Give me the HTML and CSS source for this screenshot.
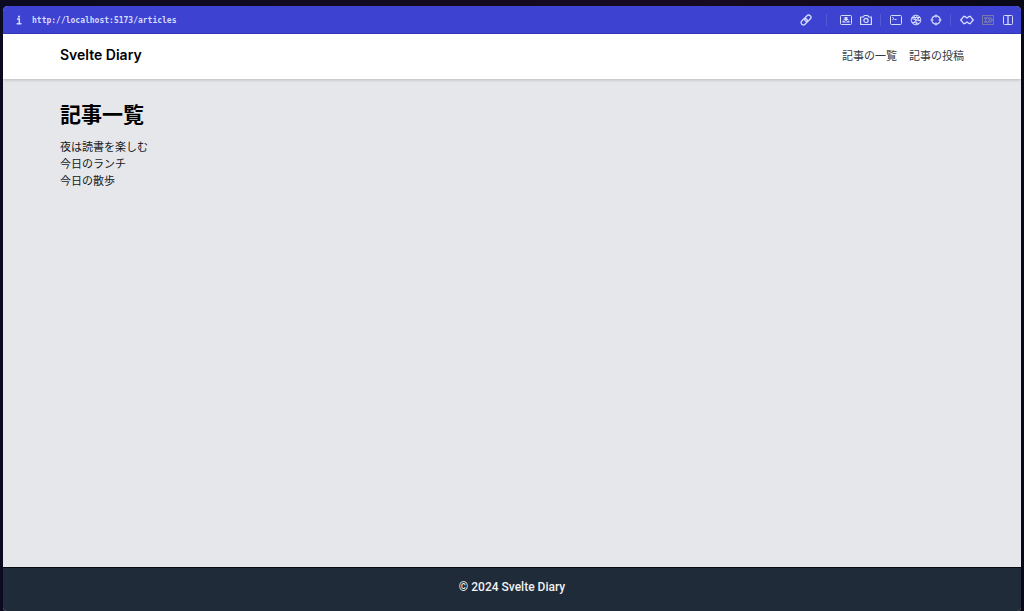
FILE: index.html
```html
<!DOCTYPE html>
<html lang="ja">
<head>
<meta charset="utf-8">
<title>Svelte Diary</title>
<link rel="stylesheet" href="styles.css">
</head>
<body>
<div class="window">
  <div class="toolbar">
    <button class="tool info" aria-label="Site information"><svg viewBox="0 0 12 12"><path d="M5 1.8h2v1.7H5z" fill="currentColor" stroke="none"/><path d="M4 5h2.3v4.8M3.7 9.8h4.8" stroke-width="1.5"/></svg></button>
    <span class="url">http://localhost:5173/articles</span>
    <div class="tools">
      <div class="group">
        <button class="tool" aria-label="Copy link"><svg viewBox="0 0 12 12"><g transform="rotate(-45 6 6)" stroke-width="1.3"><rect x="0" y="3.7" width="7" height="4.6" rx="2.3"/><rect x="5" y="3.7" width="7" height="4.6" rx="2.3"/></g></svg></button>
      </div>
      <div class="group">
        <button class="tool" aria-label="Capture element"><svg viewBox="0 0 12 12"><rect x=".5" y="1.5" width="11" height="9" rx="1"/><path d="M4.5 3h3v2h1.300L6 7.200 3.200 5h1.300zM2.500 6.700h1.500L6 8.200l2-1.500h1.500V8.500h-7z" fill="currentColor" stroke="none"/></svg></button>
        <button class="tool" aria-label="Take screenshot"><svg viewBox="0 0 12 12"><path d="M.6 3h2.7l1-1.5h3.4l1 1.5h2.7v7.5H.6z" stroke-width="1.2" stroke-linejoin="round"/><circle cx="6" cy="6.4" r="2.1" stroke-width="1.2"/></svg></button>
      </div>
      <div class="group">
        <button class="tool" aria-label="Console"><svg viewBox="0 0 12 12"><rect x=".5" y="1.5" width="11" height="9" rx="1"/><path d="M2.4 3.4 4 4.6 2.4 5.8M4.5 5.5h2"/></svg></button>
        <button class="tool" aria-label="Network"><svg viewBox="0 0 12 12"><circle cx="6" cy="6" r="4.8"/><path d="M1.5 4.5 10.5 7M4 1.6 7 10.7M9.5 2.5 3 9.7M6 1.2l4 6M2 8.2l7 1.3M2 3.5h8"/></svg></button>
        <button class="tool" aria-label="Inspect"><svg viewBox="0 0 12 12"><circle cx="6" cy="6" r="4.2" stroke-width="1.2"/><path d="M6 .5v3M6 8.5v3M.5 6h3M8.5 6h3" stroke-width="1.2"/></svg></button>
      </div>
      <div class="group">
        <button class="tool wide" aria-label="Extensions"><svg viewBox="0 0 14 12"><path d="M3.500 2.500H5L7 4l2-1.500h1.500L11.500 4 13.300 6l-1.800 2-1 1.500H9L7 8 5 9.500H3.500L2.500 8 .7 6l1.800-2z" stroke-width="1.3" stroke-linejoin="round"/></svg></button>
        <button class="tool muted" aria-label="Edit page" disabled><svg viewBox="0 0 12 12"><rect x=".5" y="1.5" width="11" height="9"/><path d="M2 4h2.500L3.500 6l1 2H2M5 3l3 3-3 3M7.500 3l3 3-3 3" stroke-width="1.300"/></svg></button>
        <button class="tool" aria-label="Split view"><svg viewBox="0 0 12 12"><rect x="1.500" y="1.500" width="9" height="9" rx="1"/><path d="M6 1.500v9" stroke-width="1.300"/></svg></button>
      </div>
    </div>
  </div>
  <header class="header">
    <a class="brand" href="#">Svelte Diary</a>
    <nav class="nav"><a href="#">記事の一覧</a><a href="#">記事の投稿</a></nav>
  </header>
  <main class="main">
    <h1 class="heading">記事一覧</h1>
    <ul class="articles">
      <li><a href="#">夜は読書を楽しむ</a></li>
      <li><a href="#">今日のランチ</a></li>
      <li><a href="#">今日の散歩</a></li>
    </ul>
  </main>
  <footer class="footer">© 2024 Svelte Diary</footer>
</div>
</body>
</html>
```
FILE: styles.css
```css
* { box-sizing: border-box; }
body {
  margin: 0;
  height: 100vh;
  padding: 6px 3px 0;
  background: linear-gradient(90deg, #0c0a20, #180a20 70%, #090817);
  font-family: Inter, "Noto Sans CJK JP", sans-serif;
  font-size: 11px;
  color: #17191d;
}
a { color: inherit; text-decoration: none; }
.window {
  display: flex;
  flex-direction: column;
  height: 100%;
  overflow: hidden;
  border-radius: 5px 5px 4px 4px;
  background: #e5e7eb;
}
.toolbar {
  display: flex;
  align-items: center;
  flex: none;
  height: 28px;
  padding: 0 7px 0 10px;
  background: #3e42d0;
  border-bottom: 1px solid #3438b8;
  color: #d5dcff;
}
.url {
  margin-left: 7px;
  padding-top: 2px;
  font: bold 8px "DejaVu Sans Mono", monospace;
}
.tools { display: flex; align-items: center; margin-left: auto; }
.group { display: flex; align-items: center; gap: 8px; }
.group + .group { margin-left: 8px; padding-left: 9px; border-left: 1px solid #5559d8; }
.group:nth-child(2) { margin-left: 14px; padding-left: 13px; }
.tool {
  width: 12px;
  height: 12px;
  padding: 0;
  border: 0;
  background: none;
  color: inherit;
}
.tool.wide { width: 14px; }
.tool.muted { color: #7779ac; }
.tool svg {
  display: block;
  width: 100%;
  height: 100%;
  fill: none;
  stroke: currentColor;
  stroke-width: 1;
}
.header {
  display: flex;
  align-items: center;
  justify-content: space-between;
  flex: none;
  height: 45px;
  padding: 0 57px 4px;
  background: #fff;
  box-shadow: 0 1px 3px #0003;
}
.brand { font-size: 14px; font-weight: 600; color: #000; }
.nav { display: flex; gap: 12px; color: #34383e; }
.main { flex: 1; padding: 21px 57px; }
.heading {
  margin: 0 0 9px;
  font-size: 21px;
  line-height: 30px;
  font-weight: 700;
  color: #000;
}
.articles { margin: 0; padding: 0; list-style: none; line-height: 17px; }
.footer {
  flex: none;
  height: 44px;
  border-top: 1px solid #080c12;
  background: #1f2b38;
  color: #f0f2f5;
  font-family: Roboto, sans-serif;
  font-size: 12px;
  font-weight: 500;
  line-height: 38px;
  text-align: center;
}
```
